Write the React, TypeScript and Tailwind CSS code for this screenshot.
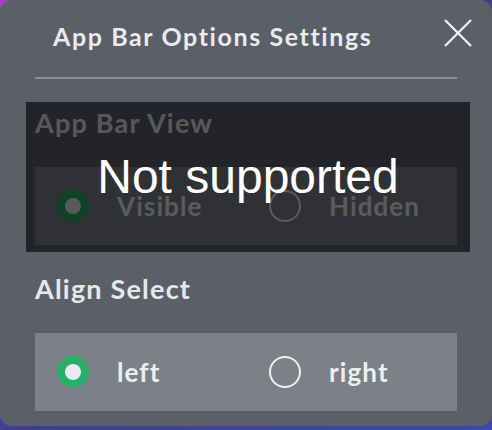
import React from "react";

function Radio({ checked }: { checked: boolean }) {
  if (checked) {
    return (
      <span className="flex h-[32px] w-[32px] shrink-0 items-center justify-center rounded-full bg-[#27b065]">
        <span className="h-[16px] w-[16px] rounded-full bg-[#e9e9ee]" />
      </span>
    );
  }
  return <span className="h-[32px] w-[32px] shrink-0 rounded-full border-2 border-[#eef0f2]" />;
}

function Section({ label, options, selected }: { label: string; options: string[]; selected: number }) {
  return (
    <div className="flex flex-col">
      <div className="text-[27px] leading-[34px] font-bold tracking-[1.2px] text-[#e6e8eb]">{label}</div>
      <div className="mt-[27px] flex h-[78px] items-center overflow-hidden bg-[#7c8188] pl-[22px]">
        {options.map((o, i) => (
          <div key={o} className="flex w-[212px] shrink-0 items-center">
            <Radio checked={i === selected} />
            <span className="ml-[28px] text-[26px] font-bold tracking-[1.1px] text-[#eceef0]">{o}</span>
          </div>
        ))}
      </div>
    </div>
  );
}

export default function App() {
  return (
    <div
      className="h-[430px] w-[492px] bg-[linear-gradient(135deg,#b03ad0_0%,#3b3f8f_50%,#3d49b0_100%)]"
      style={{ fontFamily: "Lato, 'Open Sans', sans-serif" }}
    >
      <div className="flex h-[426px] w-[492px] flex-col rounded-[12px] bg-[#5b6068] px-[35px]">
        <div className="flex h-[77px] items-start justify-between pl-[18px] pt-[19px]">
          <div className="text-[25px] leading-[34px] font-bold tracking-[1.6px] text-[#e9ebee]">
            App Bar Options Settings
          </div>
          <button className="-mr-[16px] -mt-[1px] text-[#f2f3f5]">
            <svg width="30" height="30" viewBox="0 0 30 30" fill="none" stroke="currentColor" strokeWidth="2.2">
              <path d="M2 2 L28 28 M28 2 L2 28" />
            </svg>
          </button>
        </div>
        <div className="h-[2px] bg-[#8a8f96]" />
        <div className="relative mt-[27px]">
          <Section label="App Bar View" options={["Visible", "Hidden"]} selected={0} />
          <div className="absolute -left-[9px] -right-[13px] -top-[4px] -bottom-[7px] flex items-center justify-center bg-[rgba(0,0,0,0.62)]">
            <span
              className="text-[48px] leading-none text-white"
              style={{ fontFamily: "'Liberation Sans', Arial, sans-serif" }}
            >
              Not supported
            </span>
          </div>
        </div>
        <div className="mt-[27px]">
          <Section label="Align Select" options={["left", "right"]} selected={0} />
        </div>
      </div>
    </div>
  );
}
